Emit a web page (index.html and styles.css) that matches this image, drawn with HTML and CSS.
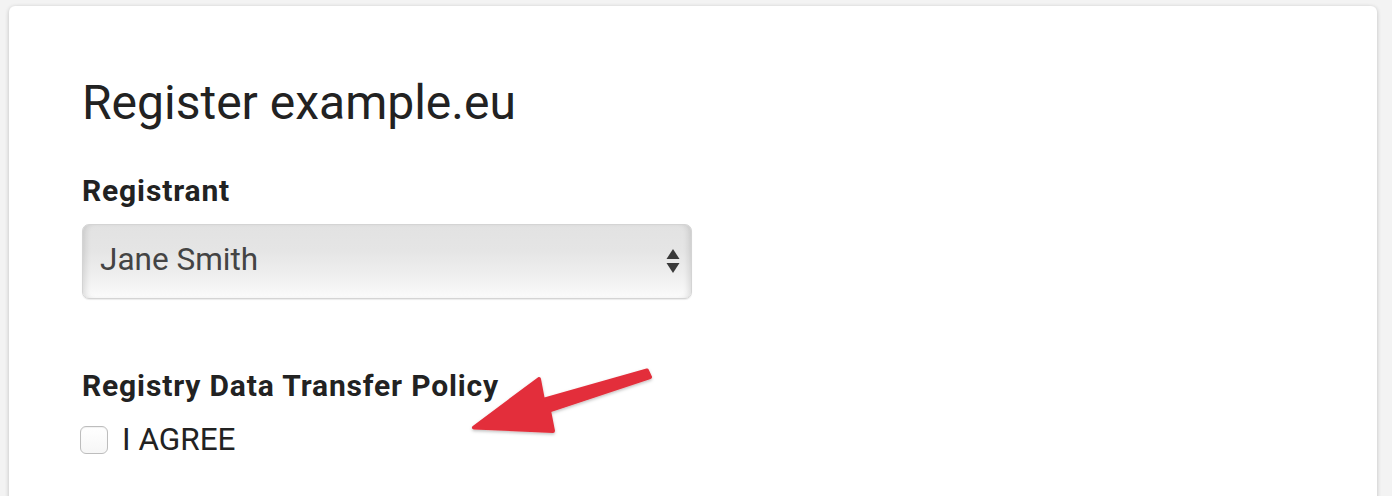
FILE: index.html
```html
<!DOCTYPE html>
<html lang="en">
<head>
<meta charset="utf-8">
<title>Register example.eu</title>
<link rel="stylesheet" href="styles.css">
</head>
<body>
<div class="page">
  <div class="card">
    <h1 class="title">Register example.eu</h1>
    <div class="field">
      <label class="label">Registrant</label>
      <div class="select">
        <span class="select-value">Jane Smith</span>
        <svg class="select-arrows" width="14" height="26" viewBox="0 0 14 26">
          <path d="M7 1 L13.5 11 L0.5 11 Z" fill="#3a3a3a"/>
          <path d="M0.5 15 L13.5 15 L7 25 Z" fill="#3a3a3a"/>
        </svg>
      </div>
    </div>
    <div class="field field-policy">
      <label class="label">Registry Data Transfer Policy</label>
      <div class="check-row">
        <span class="checkbox"></span>
        <span class="check-text">I AGREE</span>
      </div>
    </div>
  </div>
  <svg class="annotation" width="1392" height="496" viewBox="0 0 1392 496">
    <defs>
      <filter id="sh" x="-10%" y="-10%" width="120%" height="130%">
        <feDropShadow dx="0" dy="1.5" stdDeviation="1.5" flood-color="#000" flood-opacity="0.25"/>
      </filter>
    </defs>
    <polygon filter="url(#sh)" fill="#e32f3b" stroke="#e32f3b" stroke-width="4" stroke-linejoin="round"
      points="647,370.5 543,400 539,379 474,427.5 553,431 549,410.5 650,377"/>
  </svg>
</div>
</body>
</html>
```

FILE: styles.css
```css
* { box-sizing: border-box; }

html, body {
  margin: 0;
  padding: 0;
  background: #f3f3f3;
  overflow: hidden;
}

.page {
  position: relative;
  width: 1392px;
  height: 496px;
  padding: 6px 15px 0 9px;
  font-family: Roboto, "Liberation Sans", Arial, sans-serif;
  color: #222;
}

.card {
  background: #fff;
  border-radius: 6px;
  box-shadow: 0 1px 4px rgba(0, 0, 0, 0.22);
  min-height: 620px;
  padding: 69px 73px 40px 73px;
}

.title {
  margin: 0;
  font-size: 48px;
  line-height: 56px;
  font-weight: 400;
  color: #222;
}

.field {
  margin-top: 44px;
  display: flex;
  flex-direction: column;
  align-items: flex-start;
}

.field-policy {
  margin-top: 71px;
}

.label {
  font-size: 30px;
  line-height: 32px;
  font-weight: 700;
  letter-spacing: 0.85px;
  color: #222;
}

.select {
  margin-top: 17px;
  width: 610px;
  height: 75px;
  border: 1px solid #d4d4d4;
  border-radius: 7px;
  background: linear-gradient(to bottom, #e2e2e2 0%, #e5e5e5 35%, #efefef 70%, #fbfbfb 100%);
  box-shadow: inset 6px 0 6px -4px rgba(0,0,0,0.12), inset -6px 0 6px -4px rgba(0,0,0,0.12), 0 1px 1px rgba(0,0,0,0.08);
  display: flex;
  align-items: center;
  justify-content: space-between;
  padding: 0 11px 0 17px;
}

.select-value {
  font-size: 31.5px;
  line-height: 36px;
  color: #444;
  margin-top: -3px;
}

.select-arrows {
  display: block;
  margin-top: -2px;
}

.check-row {
  margin-top: 20px;
  display: flex;
  align-items: center;
  gap: 14px;
}

.checkbox {
  width: 28px;
  height: 28px;
  margin-left: -2px;
  border: 1px solid #bdbdbd;
  border-radius: 6px;
  background: linear-gradient(to bottom, #ffffff, #f6f6f6);
  box-shadow: inset 0 1px 1px rgba(0,0,0,0.06);
}

.check-text {
  font-size: 31.5px;
  line-height: 36px;
  color: #222;
}

.annotation {
  position: absolute;
  left: 0;
  top: 0;
  pointer-events: none;
}
```
